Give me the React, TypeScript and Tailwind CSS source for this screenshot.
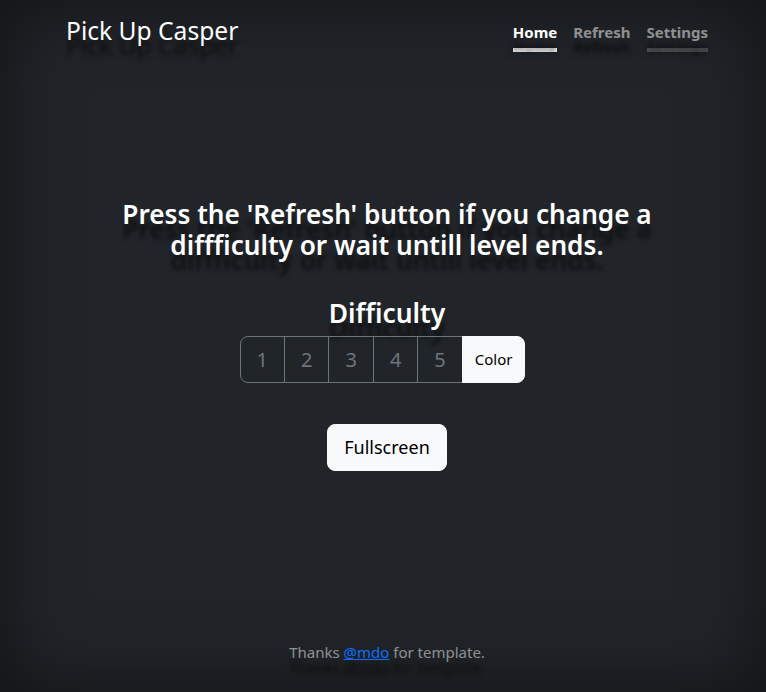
import React from "react";

const shadow = "[text-shadow:0_15px_4px_rgba(0,0,0,0.55)]";

export default function App() {
  return (
    <div
      className={`flex h-screen w-full flex-col bg-[#212529] pl-2 text-center text-white shadow-[inset_0_0_5rem_rgba(0,0,0,0.5)] ${shadow}`}
      style={{ fontFamily: '"Noto Sans", "Open Sans", sans-serif' }}
    >
      <div className="mx-auto flex h-full w-full max-w-[674px] flex-col p-4">
        <header className="mb-auto flex items-start justify-between">
          <h3 className="text-[24.6px] font-normal leading-[30px]">Pick Up Casper</h3>
          <nav className="flex gap-4">
            <a className="border-b-4 border-white py-1 text-[15px] font-bold leading-6 text-white">Home</a>
            <a className="border-b-4 border-transparent py-1 text-[15px] font-bold leading-6 text-white/50">Refresh</a>
            <a className="border-b-4 border-white/25 py-1 text-[15px] font-bold leading-6 text-white/50">Settings</a>
          </nav>
        </header>

        <main className="mb-[22px] px-4">
          <h1 className="mb-[37px] text-[26.2px] font-semibold leading-[31px]">
            Press the 'Refresh' button if you change a diffficulty or wait untill level ends.
          </h1>
          <h3 className="mb-2 text-[26.4px] font-semibold leading-[30px]">Difficulty</h3>
          <div className="mr-[9px] inline-flex [text-shadow:none]">
            {["1", "2", "3", "4", "5"].map((n, i) => (
              <button
                key={n}
                className={`-ml-px border border-[#6c757d] px-4 py-2 text-xl leading-[29px] text-[#6c757d] first:ml-0 ${i === 0 ? "rounded-l-lg" : ""}`}
              >
                {n}
              </button>
            ))}
            <button className="-ml-px rounded-r-lg border border-[#f8f9fa] bg-[#f8f9fa] px-3 text-[15px] text-black">
              Color
            </button>
          </div>
          <div className="mt-[41px] [text-shadow:none]">
            <button className="rounded-lg border border-[#f8f9fa] bg-[#f8f9fa] px-4 py-2 text-[18px] leading-[29px] text-black">
              Fullscreen
            </button>
          </div>
        </main>

        <footer className="mt-auto pb-3 text-[15px] leading-6 text-white/50">
          <p>
            Thanks <a className="text-[#0d6efd] underline">@mdo</a> for template.
          </p>
        </footer>
      </div>
    </div>
  );
}
